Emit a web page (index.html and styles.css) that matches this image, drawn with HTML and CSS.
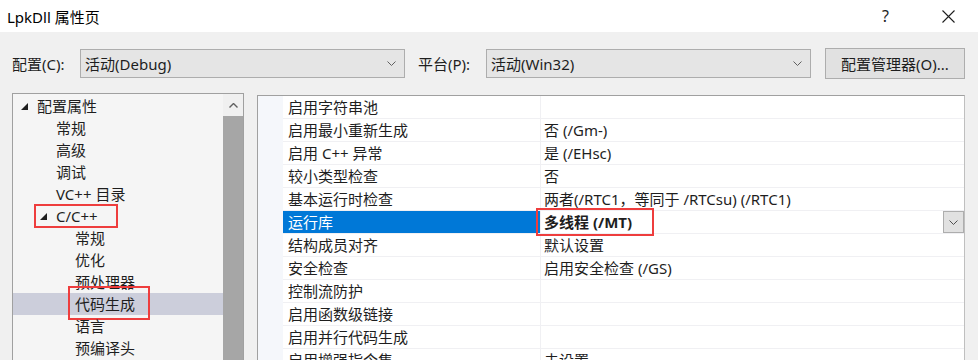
FILE: index.html
```html
<!DOCTYPE html>
<html lang="zh-CN">
<head>
    <meta charset="UTF-8">
    <title>LpkDll 属性页</title>
    <link rel="stylesheet" href="styles.css">
</head>
<body>
    <div class="titlebar">
        <span class="title">LpkDll 属性页</span>
        <span class="help">?</span>
        <svg class="close" width="13" height="13" viewBox="0 0 13 13">
            <path d="M0.5 0.5 L12.5 12.5 M12.5 0.5 L0.5 12.5" stroke="#1e1e1e" stroke-width="1.1" fill="none"/>
        </svg>
    </div>

    <div class="toolbar">
        <span class="label label-config">配置(C):</span>
        <div class="combo">
            <span>活动(Debug)</span>
            <svg class="chev" width="9" height="5" viewBox="0 0 9 5"><path d="M0.5 0.5 L4.5 4.5 L8.5 0.5" stroke="#606060" fill="none"/></svg>
        </div>
        <span class="label label-platform">平台(P):</span>
        <div class="combo">
            <span>活动(Win32)</span>
            <svg class="chev" width="9" height="5" viewBox="0 0 9 5"><path d="M0.5 0.5 L4.5 4.5 L8.5 0.5" stroke="#606060" fill="none"/></svg>
        </div>
        <button class="manager">配置管理器(O)...</button>
    </div>

    <div class="main">
        <div class="tree">
            <div class="tree-list">
                <div class="node lvl0"><span class="tri"></span>配置属性</div>
                <div class="node lvl1">常规</div>
                <div class="node lvl1">高级</div>
                <div class="node lvl1">调试</div>
                <div class="node lvl1">VC++ 目录</div>
                <div class="node lvl1 mark-cpp"><span class="tri"></span>C/C++<span class="redbox box-cpp"></span></div>
                <div class="node lvl2">常规</div>
                <div class="node lvl2">优化</div>
                <div class="node lvl2">预处理器</div>
                <div class="node lvl2 selected">代码生成<span class="redbox box-gen"></span></div>
                <div class="node lvl2">语言</div>
                <div class="node lvl2">预编译头</div>
            </div>
            <div class="scrollbar">
                <div class="scroll-up">
                    <svg width="9" height="5" viewBox="0 0 9 5"><path d="M0.5 4.5 L4.5 0.5 L8.5 4.5" stroke="#606060" stroke-width="1.4" fill="none"/></svg>
                </div>
                <div class="scroll-thumb"></div>
            </div>
        </div>

        <div class="grid">
            <div class="row"><div class="gutter"></div><div class="name">启用字符串池</div><div class="value"></div></div>
            <div class="row"><div class="gutter"></div><div class="name">启用最小重新生成</div><div class="value">否 (/Gm-)</div></div>
            <div class="row"><div class="gutter"></div><div class="name">启用 C++ 异常</div><div class="value">是 (/EHsc)</div></div>
            <div class="row"><div class="gutter"></div><div class="name">较小类型检查</div><div class="value">否</div></div>
            <div class="row"><div class="gutter"></div><div class="name">基本运行时检查</div><div class="value">两者(/RTC1，等同于 /RTCsu) (/RTC1)</div></div>
            <div class="row active">
                <div class="gutter"></div>
                <div class="name">运行库</div>
                <div class="value"><b>多线程 (/MT)</b><span class="redbox box-val"></span>
                    <span class="drop"><svg width="9" height="5" viewBox="0 0 9 5"><path d="M0.5 0.5 L4.5 4.5 L8.5 0.5" stroke="#505050" fill="none"/></svg></span>
                </div>
            </div>
            <div class="row"><div class="gutter"></div><div class="name">结构成员对齐</div><div class="value">默认设置</div></div>
            <div class="row"><div class="gutter"></div><div class="name">安全检查</div><div class="value">启用安全检查 (/GS)</div></div>
            <div class="row"><div class="gutter"></div><div class="name">控制流防护</div><div class="value"></div></div>
            <div class="row"><div class="gutter"></div><div class="name">启用函数级链接</div><div class="value"></div></div>
            <div class="row"><div class="gutter"></div><div class="name">启用并行代码生成</div><div class="value"></div></div>
            <div class="row"><div class="gutter"></div><div class="name">启用增强指令集</div><div class="value">未设置</div></div>
        </div>
    </div>
</body>
</html>
```

FILE: styles.css
```css
body {
    margin: 0;
    width: 978px;
    height: 360px;
    overflow: hidden;
    background-color: #f0f0f0;
    color: #1e1e1e;
    font-family: "Noto Sans", "Noto Sans CJK SC", sans-serif;
    font-size: 15px;
}

.titlebar {
    height: 32px;
    background-color: #ffffff;
    display: flex;
    align-items: center;
    padding-left: 7px;
    font-size: 15px;
}

.title {
    flex: 1;
    color: #000000;
}

.help {
    width: 16px;
    margin-right: 44px;
    font-size: 16px;
}

.close {
    margin-right: 23px;
}

.toolbar {
    height: 61px;
    display: flex;
    align-items: center;
    padding-left: 12px;
    padding-top: 1px;
    box-sizing: border-box;
}

.label-config {
    width: 68px;
}

.label-platform {
    margin-left: 13px;
    width: 68px;
}

.combo {
    width: 325px;
    height: 29px;
    box-sizing: border-box;
    background-color: #e5e5e5;
    border: 1px solid #adadad;
    display: flex;
    align-items: center;
    padding: 0 8px 0 4px;
}

.combo span {
    flex: 1;
}

.manager {
    margin-left: 14px;
    width: 140px;
    height: 31px;
    background-color: #e1e1e1;
    border: 1px solid #adadad;
    font-family: inherit;
    font-size: 15px;
    color: #1e1e1e;
    padding: 0;
}

.main {
    display: flex;
    align-items: flex-start;
    padding-left: 12px;
}

.tree {
    width: 232px;
    height: 300px;
    box-sizing: border-box;
    border: 1px solid #a0a0a0;
    background-color: #f5f5f5;
    display: flex;
}

.tree-list {
    flex: 1;
    padding-top: 1px;
}

.node {
    position: relative;
    height: 22px;
    line-height: 22px;
    white-space: nowrap;
}

.lvl0 { padding-left: 24px; }
.lvl1 { padding-left: 43px; }
.lvl2 { padding-left: 62px; }
.lvl1.mark-cpp { padding-left: 43px; }

.tri {
    position: absolute;
    top: 8px;
    width: 0;
    height: 0;
    border-left: 7px solid transparent;
    border-bottom: 7px solid #1e1e1e;
}

.lvl0 .tri { left: 8px; }
.mark-cpp .tri { left: 27px; }

.node.selected {
    background-color: #cccedb;
}

.redbox {
    position: absolute;
    border: 2px solid #ee3d3d;
    box-sizing: border-box;
}

.box-cpp {
    left: 21px;
    top: -1px;
    width: 84px;
    height: 24px;
}

.box-gen {
    left: 55px;
    top: -7px;
    width: 82px;
    height: 34px;
}

.scrollbar {
    width: 20px;
    display: flex;
    flex-direction: column;
}

.scroll-up {
    height: 22px;
    display: flex;
    align-items: center;
    justify-content: center;
    background-color: #f0f0f0;
}

.scroll-thumb {
    flex: 1;
    background-color: #a6a6a6;
}

.grid {
    margin-left: 13px;
    margin-top: 2px;
    width: 708px;
    height: 300px;
    box-sizing: border-box;
    border: 1px solid #a0a0a0;
    border-right-color: #bfbfbf;
    background-color: #ffffff;
}

.row {
    display: flex;
    height: 23px;
    line-height: 22px;
}

.gutter {
    width: 25px;
    background-color: #f5f7fb;
}

.name {
    width: 258px;
    padding-left: 5px;
    box-sizing: border-box;
    border-bottom: 1px solid #f0f0f3;
    border-right: 1px solid #f0f0f3;
    white-space: nowrap;
}

.value {
    flex: 1;
    position: relative;
    padding-left: 3px;
    border-bottom: 1px solid #f0f0f3;
    white-space: nowrap;
}

.row.active .name {
    background-color: #0078d7;
    color: #ffffff;
}

.box-val {
    left: -5px;
    top: -3px;
    width: 118px;
    height: 28px;
}

.drop {
    position: absolute;
    right: 0;
    top: 0;
    width: 21px;
    height: 22px;
    box-sizing: border-box;
    background-color: #e1e1e1;
    border: 1px solid #adadad;
    display: flex;
    align-items: center;
    justify-content: center;
}
```
